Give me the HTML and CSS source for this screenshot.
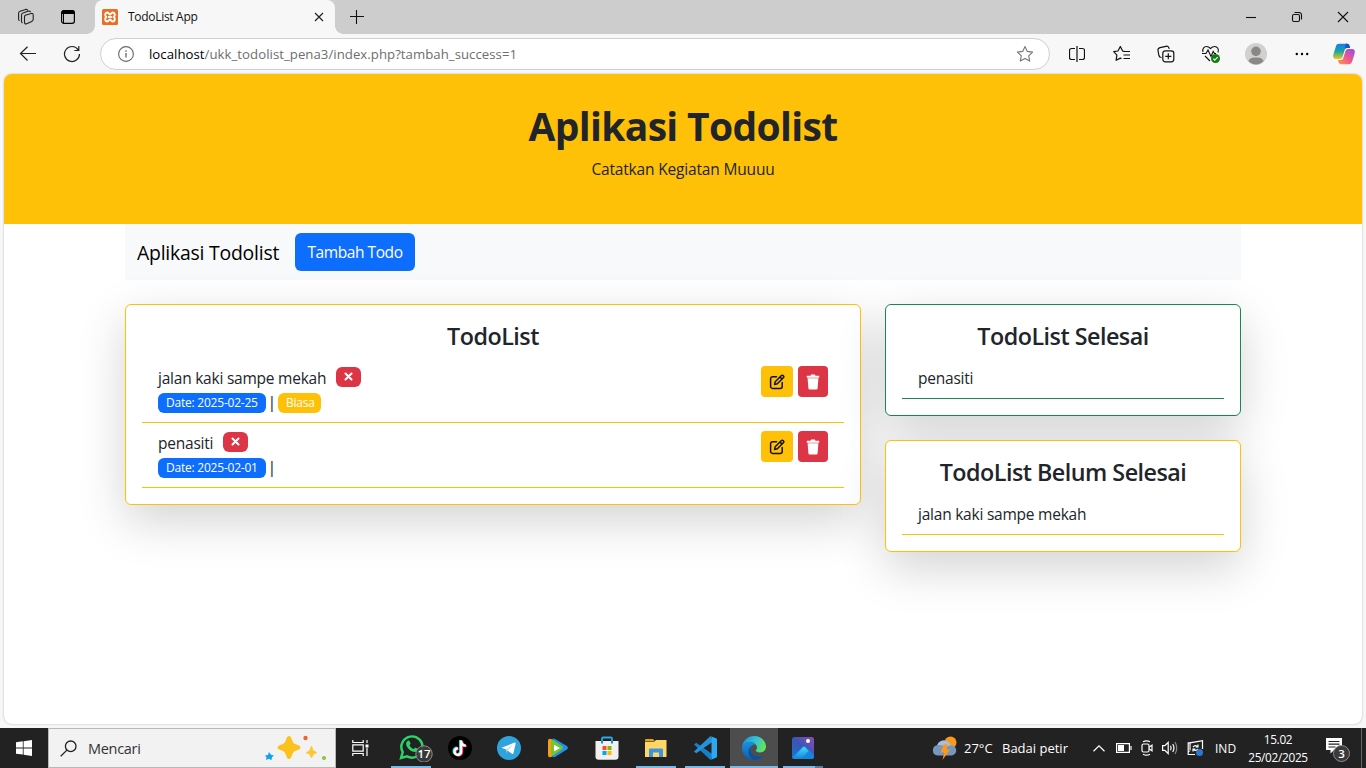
FILE: index.html
```html
<!DOCTYPE html>
<html lang="id">
<head>
<meta charset="utf-8">
<title>TodoList App</title>
<link rel="stylesheet" href="styles.css">
</head>
<body>
<div class="desktop">
  <header class="titlebar">
    <svg class="tb-icon workspaces" width="18" height="18" viewBox="0 0 18 18" fill="none" stroke="#222" stroke-width="1.100" stroke-linejoin="round" stroke-linecap="round"><path d="M8.300 7.300l5.900-1.800q2-.5 2 1.500v4.200q0 1.500-1.500 2.200l-5 2.300q-2.200.8-2.200-1.500V9q0-1.300.8-1.700z"/><path d="M4.500 13.500V7q0-1.500 1.500-2l5.500-1.900q1.300-.3 1.900.6M1.600 11.500V5.200q0-1.500 1.500-2L8.600 1.400q1.300-.3 1.900.6M4.500 13.500q.1.800.7 1.200M1.600 11.500q.1.700.6 1"/></svg>
    <svg class="tb-icon tabs" width="16" height="16" viewBox="0 0 16 16"><rect x="1.600" y="1.600" width="12.800" height="12.800" rx="2.400" fill="none" stroke="#000" stroke-width="1.200"/><path d="M1.200 5V4a3 3 0 0 1 3-3h7.600a3 3 0 0 1 3 3v1z"/><path d="M3.500 4.500v9.500" stroke="#000" stroke-width="1"/></svg>
    <div class="tab">
      <svg width="16" height="16" viewBox="0 0 16 16"><rect width="16" height="16" rx="1.500" fill="#e96f24"/><path d="M5.200 3.500c1.800 0 1.800 2 2.800 2s1-2 2.800-2c2.200 0 2.700 3.200 1 4.500 1.700 1.300 1.200 4.500-1 4.500-1.800 0-1.800-2-2.800-2s-1 2-2.800 2c-2.200 0-2.700-3.200-1-4.500-1.700-1.300-1.200-4.500 1-4.500z" fill="none" stroke="#fff" stroke-width="1.900"/><path d="M6 8h4" stroke="#fff" stroke-width="1.800"/></svg>
      <span class="tab-title">TodoList App</span>
      <svg class="tab-close" width="10" height="10" viewBox="0 0 10 10" stroke="#222" stroke-width="1.200"><path d="M1 1l8 8M9 1l-8 8"/></svg>
    </div>
    <svg class="new-tab" width="14" height="14" viewBox="0 0 14 14" stroke="#111" stroke-width="1.100"><path d="M0 6.500h14M6.500 0v14"/></svg>
    <div class="win-controls">
      <svg viewBox="0 0 12 12"><path d="M1 6.500h10"/></svg>
      <svg viewBox="0 0 12 12"><rect x="1.500" y="3.500" width="7" height="7" rx="1.500"/><path d="M3.500 1.500h4.500a2.500 2.500 0 0 1 2.500 2.500v4.500"/></svg>
      <svg viewBox="0 0 12 12"><path d="M1 1l10 10M11 1L1 11"/></svg>
    </div>
  </header>
  <div class="toolbar">
    <svg class="back" width="18" height="16" viewBox="0 0 18 16" fill="none" stroke="#222" stroke-width="1.200"><path d="M17 7.500H1.500M8.500 .8L1.500 7.500l7 7"/></svg>
    <svg class="reload" width="18" height="18" viewBox="0 0 18 18" fill="none" stroke="#222" stroke-width="1.200"><path d="M16.500 9A7.500 7.500 0 1 1 15.200 4.800M15.800 1v4.500h-4.500"/></svg>
    <div class="address">
      <svg width="16" height="16" viewBox="0 0 16 16" fill="none" stroke="#666"><circle cx="8" cy="8" r="7.400" stroke-width="1.100"/><path d="M8 7v4.500M8 4.300v1.400" stroke-width="1.300"/></svg>
      <span class="url"><b>localhost</b>/ukk_todolist_pena3/index.php?tambah_success=1</span>
      <svg class="star" width="18" height="18" viewBox="0 0 18 18" fill="none" stroke="#777" stroke-width="1.100" stroke-linejoin="round"><path d="M9 1.500l2.300 4.900 5.300.7-3.900 3.700 1 5.300L9 13.500l-4.700 2.600 1-5.300L1.400 7.100l5.300-.7z"/></svg>
    </div>
    <div class="tools">
      <span class="tool"><svg width="16" height="16" viewBox="0 0 16 16" fill="none" stroke="#111" stroke-width="1.200"><path d="M6 2.500H2.500a2 2 0 0 0-2 2v7a2 2 0 0 0 2 2H6M10 2.500h3.500a2 2 0 0 1 2 2v7a2 2 0 0 1-2 2H10M8 0v16"/></svg></span>
      <span class="tool"><svg width="18" height="18" viewBox="0 0 18 18" fill="none" stroke="#111" stroke-width="1.200" stroke-linejoin="round"><path d="M11.500 6.300L9.600 6 7.300 1.500 5 6l-4.300.7 3.200 3.400-.8 5.200 4.200-2.200 1.200.6"/><path d="M10.500 6.500H17M10.500 10H17M10.500 13.500H17"/></svg></span>
      <span class="tool"><svg width="18" height="18" viewBox="0 0 18 18" fill="none" stroke="#111" stroke-width="1.200"><rect x="5.800" y="5.800" width="11" height="11" rx="2.500"/><path d="M11.300 8.300v6M8.300 11.300h6M4.500 12.500c-1.500 0-2.300-.700-2.600-2L1 5.500C.7 4 1.500 3 3 2.600l6-1.300c1.400-.3 2.400.3 2.900 1.600l.3 1"/></svg></span>
      <span class="tool heart"><svg width="20" height="20" viewBox="0 0 20 20" fill="none" stroke="#111" stroke-width="1.100"><path d="M2 8C1 5 3 2.500 5.500 2.500c1.700 0 2.800.8 4 2C10.700 3.300 11.800 2.500 13.500 2.500c3 0 4.700 2.800 3.500 6M1 9.500h4l2-3.500 3 6.500 2.200-5 1.300 2h1.500M4 12l5 5"/><circle cx="14.500" cy="14.500" r="4.500" fill="#107c10" stroke="none"/><path d="M12.300 14.700l1.500 1.500 2.900-3" stroke="#fff"/></svg></span>
      <span class="tool"><svg width="22" height="22" viewBox="0 0 22 22"><circle cx="11" cy="11" r="11" fill="#d2d0ce"/><circle cx="11" cy="8.300" r="4.800" fill="#8a8886"/><path d="M3.500 18c1-3 4-3.500 7.500-3.500s6.500.5 7.500 3.500c-2 2.300-4.500 3.500-7.500 3.500S5.500 20.300 3.500 18z" fill="#8a8886"/></svg></span>
      <span class="tool"><svg width="14" height="4" viewBox="0 0 14 4"><circle cx="1.800" cy="2" r="1.200"/><circle cx="7" cy="2" r="1.200"/><circle cx="12.200" cy="2" r="1.200"/></svg></span>
      <span class="tool"><svg width="22" height="22" viewBox="0 0 22 22"><defs><linearGradient id="cpA" x1="0" y1="0" x2="0" y2="1"><stop offset="0" stop-color="#1b7fe8"/><stop offset=".5" stop-color="#17a6a5"/><stop offset="1" stop-color="#f2c811"/></linearGradient><linearGradient id="cpB" x1="1" y1="0" x2="0" y2="1"><stop offset="0" stop-color="#8b4df0"/><stop offset=".5" stop-color="#ee5590"/><stop offset="1" stop-color="#ff9a4a"/></linearGradient></defs><path d="M6 .8h8c2 0 2.500 1.500 3 4.200h-3c-1.500 0-2 .8-2.500 2.500l-1.800 6c-.5 1.700-1.500 2.500-3 2.500H3c-3 0-3.200-2.500-2.500-5L2.700 4C3.300 2 4 .8 6 .8z" fill="url(#cpA)"/><path d="M12.500.8H14c2 0 2.500 1.500 3 4.200h-3c-1 0-1.700.4-2.100 1.300z" fill="#1558c9"/><path d="M16 21.200H8c-2 0-2.500-1.500-3-4.200h3c1.500 0 2-.8 2.500-2.500l1.800-6C12.800 6.800 13.800 6 15.300 6H19c3 0 3.200 2.500 2.500 5l-2.200 7c-.6 2-1.300 3.200-3.300 3.200z" fill="url(#cpB)"/></svg></span>
    </div>
  </div>
  <main class="page">
    <section class="hero">
      <h1>Aplikasi Todolist</h1>
      <p>Catatkan Kegiatan Muuuu</p>
    </section>
    <div class="container">
      <nav class="navbar"><span class="brand">Aplikasi Todolist</span><button class="btn-add"><span>Tambah Todo</span></button></nav>
      <div class="columns">
        <section class="card">
          <h4>TodoList</h4>
          <div class="item">
            <div>
              <div class="line"><span class="task w-long">jalan kaki sampe mekah</span><span class="badge danger"><svg width="9" height="9" viewBox="0 0 9 9"><path d="M1.500 1.500l6 6M7.500 1.500l-6 6"/></svg></span></div>
              <div class="line meta"><span class="badge primary">Date: 2025-02-25</span><span class="bar">|</span><span class="badge warning">Biasa</span></div>
            </div>
            <div class="actions">
              <button class="act edit"><svg width="16" height="16" viewBox="0 0 16 16"><use href="#pen"/></svg></button>
              <button class="act trash"><svg width="14" height="16" viewBox="0 0 14 16"><use href="#bin"/></svg></button>
            </div>
          </div>
          <div class="item">
            <div>
              <div class="line"><span class="task w-short">penasiti</span><span class="badge danger"><svg width="9" height="9" viewBox="0 0 9 9"><path d="M1.500 1.500l6 6M7.500 1.500l-6 6"/></svg></span></div>
              <div class="line meta"><span class="badge primary">Date: 2025-02-01</span><span class="bar">|</span></div>
            </div>
            <div class="actions">
              <button class="act edit"><svg width="16" height="16" viewBox="0 0 16 16"><use href="#pen"/></svg></button>
              <button class="act trash"><svg width="14" height="16" viewBox="0 0 14 16"><use href="#bin"/></svg></button>
            </div>
          </div>
        </section>
        <div class="side">
          <section class="card done">
            <h4>TodoList Selesai</h4>
            <div class="item"><span class="task">penasiti</span></div>
          </section>
          <section class="card">
            <h4>TodoList Belum Selesai</h4>
            <div class="item"><span class="task">jalan kaki sampe mekah</span></div>
          </section>
        </div>
      </div>
    </div>
  </main>
  <footer class="taskbar">
    <div class="start"><svg width="16" height="16" viewBox="0 0 16 16" fill="#fff"><path d="M0 2.200l6.800-.9v6.200H0zM7.600 1.200L16 0v7.500H7.600zM0 8.400h6.800v6.200L0 13.700zM7.600 8.400H16V16l-8.400-1.200z"/></svg></div>
    <div class="search">
      <svg width="17" height="17" viewBox="0 0 17 17" fill="none" stroke="#222" stroke-width="1.300"><circle cx="10.700" cy="6.300" r="5.300"/><path d="M6.900 10.100L.7 16.300"/></svg>
      <span>Mencari</span>
      <svg class="sparkles" width="62" height="26" viewBox="0 0 62 26"><path d="M24 1c1.500 0 2.500 2 3.300 4.500.8 2.300 1.500 3 3.900 3.900C33.500 10.200 35.500 11 35.500 12.500s-2 2.300-4.300 3.100c-2.400.9-3.100 1.600-3.900 3.900-.8 2.500-1.800 4.500-3.300 4.500s-2.500-2-3.300-4.500c-.8-2.300-1.500-3-3.900-3.900-2.300-.8-4.300-1.600-4.300-3.100s2-2.300 4.300-3.100c2.400-.9 3.100-1.600 3.900-3.900C21.500 3 22.500 1 24 1z" fill="#fbc21d"/><path d="M46.500 11c1 0 1.500 3.700 2.200 4.400s3.300 1.100 3.300 2.100-2.700 1.300-3.300 2-1.200 3.500-2.200 3.500-1.500-2.900-2.200-3.500-3.300-1-3.300-2 2.700-1.400 3.300-2.100 1.200-4.400 2.200-4.400z" fill="#fcc732"/><path d="M4 17l2 2.700 3 .7-2 1.800-.6 3-2.400-1.400L1 25l.5-2.700L0 20.500l3-.5z" fill="#12a2ec"/><circle cx="40.500" cy="3" r="2.200" fill="#f0622d"/><circle cx="59" cy="23" r="2.100" fill="#8bc53f"/></svg>
    </div>
    <div class="taskview"><svg width="17" height="16" viewBox="0 0 17 16" fill="none" stroke="#fff" stroke-width="1.200"><path d="M.8 0v2.500h10.400V0M.8 16v-2.500h10.400V16M.8 4.800h10.400v6.400H.8zM15 0v3M15 8v8"/><path d="M13.500 4.500h3v3h-3z" fill="#fff" stroke="none"/></svg></div>
    <div class="apps">
      <div class="app run"><svg width="34" height="28" viewBox="0 0 34 28"><path d="M2 24l1.700-5.800A10.600 10.600 0 1 1 8 22.400z" fill="none" stroke="#2bd467" stroke-width="2.400"/><path d="M8.300 7.300c.8-1 2-.9 2.400.1l.8 1.900c.2.600-.5 1.300-1 1.900.9 1.900 2.200 3.100 4.100 3.900.7-.8 1.300-1.700 1.900-1.400l2.200 1c.7.400.4 1.700-.3 2.400-1.300 1.200-3.200 1.200-5.600.1-2.600-1.200-5.400-4-5.700-7.200 0-1.200.5-2.100 1.200-2.700z" fill="#2bd467"/><circle cx="25" cy="21" r="8.200" fill="#3b3b3b" fill-opacity=".92" stroke="#8c8c8c" transform="translate(0 -1)"/><text x="25" y="24.300" class="count">17</text></svg></div>
      <div class="app"><svg width="24" height="24" viewBox="0 0 24 24"><circle cx="12" cy="12" r="12"/><g fill="none" stroke-width="2.600"><path d="M12.400 4v11a3.300 3.300 0 1 1-3.300-3.200M12.400 5c.3 2.500 2 4 4.600 4.200" stroke="#25f4ee"/><path d="M14 5v11a3.300 3.300 0 1 1-3.300-3.200M14 6c.3 2.500 2 4 4.600 4.200" stroke="#fe2c55"/><path d="M13.200 4.500v11a3.300 3.300 0 1 1-3.300-3.200M13.200 5.500c.3 2.500 2 4 4.600 4.200" stroke="#fff" stroke-width="2.200"/></g></svg></div>
      <div class="app"><svg width="24" height="24" viewBox="0 0 24 24"><circle cx="12" cy="12" r="12" fill="#2fa3dc"/><path d="M4.500 11.800l13-5.200c.8-.3 1.300.2 1.100 1.100L16.500 17c-.2.900-.8 1.100-1.500.7L9 13.500z" fill="#fff"/><path d="M9 13.500l7-5-5.600 6.200-.4 3z" fill="#b9dcf0"/></svg></div>
      <div class="app"><svg width="22" height="20" viewBox="0 0 22 20"><path d="M1 3Q1 0 4 1l7 3v12l-7 3q-3 1-3-2z" fill="#ff9a13"/><path d="M5 2.500Q5-.5 8 1l11.500 6.700q2.800 2 0 4L8 19q-3 1-3-2z" fill="#2190ef"/><path d="M4 4q0-3 3-1.500l8 5.500q2 1.700 0 3.500l-8 5.500q-3 1.500-3-1.500z" fill="#72c72b"/><path d="M7 6.700l6 3.300-6 3.400z" fill="#fff"/></svg></div>
      <div class="app"><svg width="24" height="24" viewBox="0 0 24 24"><path d="M7 7V2.700Q7 1.500 8.200 1.500h7.600q1.200 0 1.200 1.200V7" fill="none" stroke="#29a9e8" stroke-width="1.800"/><path d="M.5 5h23v15.500q0 3.300-3.300 3.300H3.800Q.5 23.800.5 20.500z" fill="#f0f0f0"/><path d="M7.500 10h4v4h-4z" fill="#f25022"/><path d="M12.500 10h4v4h-4z" fill="#7fba00"/><path d="M7.500 15h4v4h-4z" fill="#00a4ef"/><path d="M12.500 15h4v4h-4z" fill="#ffb900"/><path d="M6 5h2v2.500H6zM16 5h2v2.500h-2z" fill="#1b8fd0"/></svg></div>
      <div class="app run"><svg width="22" height="20" viewBox="0 0 22 20"><path d="M0 2q0-1 1-1h7l2 2.500H0z" fill="#e5a50a"/><path d="M0 4h9l2-2h10.500v17H0z" fill="#ffd767"/><path d="M4 19v-7.500q0-1 1-1h12q1 0 1 1V19h-4v-4.500H8V19z" fill="#3e95dd"/></svg></div>
      <div class="app run"><svg width="24" height="24" viewBox="0 0 24 24"><path d="M1 8.500L3.200 6.700 20 18.600 17.500 24z" fill="#1181cc"/><path d="M1 15.500l2.200 1.800L20 5.400 17.500 0z" fill="#2493dc"/><path d="M17.500 0L24 2.700v18.600L17.500 24q1-.3 1-1.800V1.800Q18.500.3 17.500 0z" fill="#2ea8ef"/></svg></div>
      <div class="app run active"><svg width="24" height="24" viewBox="0 0 24 24"><defs><linearGradient id="eTop" x1="0" y1=".3" x2="1" y2=".6"><stop offset="0" stop-color="#1795dd"/><stop offset=".5" stop-color="#35c1d8"/><stop offset="1" stop-color="#63e84f"/></linearGradient><linearGradient id="eLow" x1="0" y1="0" x2="0" y2="1"><stop offset="0" stop-color="#1a91dd"/><stop offset="1" stop-color="#0b5faf"/></linearGradient></defs><path d="M.2 11C.8 4.500 6 0 12 0c7 0 12 5 12 10.500 0 3.700-2.800 6-6 6-2.700 0-4.200-1-4.200-1.900 0-.7 1.200-1.100 1.200-3C15 8 11 6 7.500 6 4 6 1.400 8.200.2 11z" fill="url(#eTop)"/><path d="M0 12c0-3.500 3.200-6 7.500-6 2.800 0 5 1 6.300 2.600C10 8 8.400 11 8.400 13.500c0 4.400 4.400 7 8.600 7 2 0 3.700-.7 4.700-1.100C19.500 22.300 16 24 12 24 5.500 24 0 19 0 12z" fill="url(#eLow)"/><path d="M9.500 9.800C7.500 12 7.500 20 17 20.500c2 0 3.700-.7 4.700-1.100-2.500 3.500-6.500 4.600-9.700 4.600-5.500-2-7.500-11-2.500-14.200z" fill="#144f94"/></svg></div>
      <div class="app run stacked"><svg width="22" height="22" viewBox="0 0 22 22"><defs><linearGradient id="ph" x1="0" y1="1" x2="1" y2="0"><stop offset="0" stop-color="#1677d2"/><stop offset=".5" stop-color="#3b55b5"/><stop offset="1" stop-color="#8a4fb0"/></linearGradient><linearGradient id="hill" x1="0" y1="0" x2="0" y2="1"><stop offset="0" stop-color="#45dcf7"/><stop offset="1" stop-color="#1782dd"/></linearGradient></defs><rect width="22" height="22" rx="2.500" fill="url(#ph)"/><circle cx="16" cy="4" r="2" fill="#fff"/><path d="M0 20L10.500 9.500q1.500-1.200 3 0L22 18v1.500Q22 22 19.500 22h-17Q.5 22 0 20z" fill="#1586dd"/><path d="M1 21L11 10.300q1-.9 2 0l3.500 3.700L9 22H2.500z" fill="url(#hill)"/></svg></div>
    </div>
    <div class="weather">
      <svg width="25" height="25" viewBox="0 0 25 25"><circle cx="18.500" cy="6.500" r="6" fill="#fb9a16"/><path d="M5.500 19.500a5.200 5.200 0 0 1-.3-10.300A7.400 7.400 0 0 1 19 9.500a5 5 0 0 1 .5 10z" fill="#7596bd"/><path d="M5.200 9.200A7.400 7.400 0 0 1 19 9.500c-2 0-3.500.5-4.500 2-2-2-6-3-9.300-2.300z" fill="#a9bfd8"/><path d="M11.500 8.500h4.500l-1.500 5H18L10.500 24l1.700-7.500H8.700z" fill="#ff961e"/></svg>
      <span class="temp">27°C</span><span class="cond">Badai petir</span>
    </div>
    <div class="tray">
      <svg width="12" height="7" viewBox="0 0 12 7"><path d="M.5 6.300L6 .9l5.500 5.400"/></svg>
      <svg width="16" height="10" viewBox="0 0 16 10"><path d="M.6.600h12.800v8.800H.6zM15 3v4"/><path d="M2 2h6v6H2z" fill="#fff" stroke="none"/></svg>
      <svg width="13" height="16" viewBox="0 0 13 16"><rect x="1" y="4" width="7" height="8" rx="1.500"/><path d="M8 7.200l3-2v5.600l-3-2M2 1.800q3.500-2 7 0M2 14.200q3.500 2 7 0"/></svg>
      <svg width="17" height="14" viewBox="0 0 17 14"><path d="M.6 4.700h2.200l3.400-3.200v11L2.800 9.300H.6zM8.500 4.700q1.300 2.300 0 4.600M10.700 3q2.500 4 0 8"/><path d="M13 1q3.500 6 0 12" stroke="#888"/></svg>
      <svg width="17" height="16" viewBox="0 0 17 16"><path d="M8 14.500H1.200V12M.6 11.500h2M3 10.500V2.800L15.500.700V9M3 2.800H1.200V12M6 7q2.500-2.800 5 0M11 4.500V7H8.700M11 9q-2.500 2.800-5 0M6 11.500V9h2.300"/><circle cx="12.500" cy="12.500" r="3.500" fill="#2b78cf" stroke="none"/></svg>
      <span class="lang">IND</span>
    </div>
    <div class="clock"><span>15.02</span><span class="date">25/02/2025</span></div>
    <div class="notify"><svg width="26" height="26" viewBox="0 0 26 26"><path d="M1 1h16v12H9l-3.500 3.500V13H1z" fill="#fff"/><path d="M3.500 4.500h11M3.500 7.200h11M3.500 10h7" stroke="#222" stroke-width="1.200"/><circle cx="16.500" cy="16.500" r="8" fill="#3b3b3b" stroke="#8c8c8c"/><text x="16.500" y="20.500" class="count">3</text></svg></div>
  </footer>
</div>
<svg class="symbols" width="0" height="0">
  <symbol id="pen" viewBox="0 0 16 16"><path d="M7.500 2.800H3.600A2 2 0 0 0 1.600 4.800v7.600a2 2 0 0 0 2 2h7.600a2 2 0 0 0 2-2V8.600M5.600 10.400l.6-2.700 6-6a1.400 1.400 0 0 1 2.100 2.100l-6 6zM11 3l2.100 2.100" fill="none" stroke="#111" stroke-width="1.500" stroke-linejoin="round" stroke-linecap="round"/></symbol>
  <symbol id="bin" viewBox="0 0 14 16"><path d="M.8 1.800h3.700L5.200.6h3.600l.7 1.200h3.700v1.900H.8zM1.600 4.300h10.800l-.8 9.900q-.1 1.200-1.300 1.200H3.700q-1.200 0-1.300-1.200z" fill="#fff"/></symbol>
</svg>
</body>
</html>
```
FILE: styles.css
```css
* { box-sizing: border-box; }
body { margin: 0; font-family: "Open Sans", "Noto Sans", sans-serif; color: #212529; overflow: hidden; }
button { font-family: inherit; border: 0; padding: 0; }
svg { display: block; flex: none; }
.symbols { position: absolute; }
.desktop { width: 1366px; height: 768px; display: flex; flex-direction: column; background: #f7f7f7; overflow: hidden; }

/* browser window */
.titlebar { height: 34px; flex: none; background: #cdcdcd; display: flex; align-items: center; }
.workspaces { margin-left: 17px; }
.tabs { margin-left: 25px; }
.tab { position: relative; width: 240px; height: 34px; margin-left: 19px; padding: 0 11px 0 7px; background: #f7f7f7; border-radius: 8px 8px 0 0; display: flex; align-items: center; }
.tab::before, .tab::after { content: ""; position: absolute; bottom: 0; width: 8px; height: 8px; }
.tab::before { left: -8px; background: radial-gradient(circle at 0 0, #cdcdcd 7.500px, #f7f7f7 8px); }
.tab::after { right: -8px; background: radial-gradient(circle at 100% 0, #cdcdcd 7.500px, #f7f7f7 8px); }
.tab-title { margin-left: 10px; padding-bottom: 1px; font-size: 12px; color: #111; letter-spacing: -.3px; white-space: nowrap; }
.tab-close { margin-left: auto; }
.new-tab { margin-left: 15px; }
.win-controls { margin-left: auto; display: flex; }
.win-controls svg { width: 46px; height: 12px; fill: none; stroke: #111; stroke-width: 1.100; }
.toolbar { height: 40px; flex: none; display: flex; align-items: center; }
.back { margin-left: 19px; }
.reload { margin-left: 26px; }
.address { width: 950px; height: 32px; margin-left: 19px; padding: 0 15px 0 17px; border: 1px solid #cfcfd4; border-radius: 16px; background: #fff; display: flex; align-items: center; }
.url { margin-left: 15px; font-size: 13.200px; letter-spacing: .04px; color: #6e6e6e; white-space: nowrap; }
.url b { font-weight: 400; color: #000; }
.star { margin-left: auto; }
.tools { display: grid; grid-template-columns: 44px 45px 44px 44px 47px 46px 37px; margin-left: 5px; }
.tool { display: flex; align-items: center; justify-content: center; height: 40px; }
.heart { padding-left: 2px; }

/* web page */
.page { width: 1358px; height: 650px; flex: none; margin-left: 4px; background: #fff; border-radius: 8px; overflow: hidden; box-shadow: 0 0 2px #aaa; }
.hero { height: 150px; padding-top: 28px; background: #ffc107; text-align: center; }
.hero h1 { margin: 0 0 7px; font-size: 39px; line-height: 48px; font-weight: 700; letter-spacing: -.65px; }
.hero p { margin: 0; font-size: 15.500px; line-height: 24px; letter-spacing: -.17px; }
.container { width: 1116px; margin: 0 auto; }
.navbar { height: 56px; padding-left: 12px; background: #f8f9fa; display: flex; align-items: center; }
.brand { width: 158px; font-size: 19.400px; letter-spacing: -.22px; color: #000; white-space: nowrap; }
.btn-add { width: 120px; height: 38px; border-radius: 6px; background: #0d6efd; color: #fff; font-size: 15.500px; letter-spacing: -.43px; white-space: nowrap; }
.columns { display: grid; grid-template-columns: 736px 356px; gap: 24px; margin-top: 24px; align-items: start; }
.side { display: grid; gap: 24px; }
.card { padding: 16px; border: 1px solid #ffc107; border-radius: 6px; background: #fff; box-shadow: 0 16px 48px rgba(0, 0, 0, .175); }
.card.done { border-color: #198754; }
.card h4 { margin: 0; padding-top: 1px; height: 37px; font-size: 23.300px; line-height: 29px; font-weight: 600; letter-spacing: -.5px; text-align: center; }
.item { padding: 8px 16px; border-bottom: 1px solid #ffc107; display: flex; justify-content: space-between; line-height: 24px; }
.done .item { border-color: #198754; }
.side .item { height: 41px; }
.line { height: 24px; display: flex; align-items: flex-start; }
.task { font-size: 15.500px; letter-spacing: -.23px; white-space: nowrap; }
.w-long { width: 178px; }
.w-short { width: 65px; }
.badge { height: 20px; padding: 0 8px; margin-top: 1px; border-radius: 6px; color: #fff; font-size: 12px; letter-spacing: -.22px; line-height: 20px; white-space: nowrap; font-weight: 400; }
.danger { width: 25px; padding-bottom: 1px; background: #dc3545; display: flex; align-items: center; }
.danger path { stroke: #fff; stroke-width: 2.100; stroke-linecap: round; }
.meta .badge { margin-top: 3px; }
.primary { width: 108px; background: #0d6efd; }
.warning { width: 43px; background: #ffc107; }
.bar { width: 12px; text-align: center; font-size: 16px; }
.actions { display: flex; gap: 5px; }
.act { height: 31px; border-radius: 4px; display: flex; align-items: center; justify-content: center; }
.edit { width: 32px; background: #ffc107; }
.trash { width: 30px; background: #dc3545; }

/* taskbar */
.taskbar { height: 40px; flex: none; margin-top: 4px; background: #222; color: #fff; display: flex; align-items: center; }
.taskbar > * { flex: none; }
.start { width: 48px; display: flex; justify-content: center; }
.search { width: 288px; height: 40px; padding: 0 8px 0 11px; border: 1px solid #b8b8b8; background: #f2f2f2; color: #333; display: flex; align-items: center; font-size: 14.500px; }
.search span { margin-left: 11px; letter-spacing: -.3px; }
.sparkles { margin-left: auto; }
.taskview { width: 50px; padding-right: 1px; display: flex; justify-content: center; }
.apps { display: grid; grid-template-columns: repeat(9, 49px); height: 40px; }
.app { display: flex; align-items: center; justify-content: center; }
.app:first-child { padding-left: 10px; }
.run { background: linear-gradient(#76b9ed, #76b9ed) 5px 38px / 40px 2px no-repeat; }
.active { width: 48px; margin-left: 1px; background: linear-gradient(#76b9ed, #76b9ed) 0 38px / 48px 2px no-repeat #4d4d4d; }
.stacked { background: linear-gradient(90deg, #76b9ed 32px, #547fa3 32px) 5px 38px / 40px 2px no-repeat; }
.count { fill: #fff; font-size: 11.500px; font-weight: 600; text-anchor: middle; }
.weather { display: flex; align-items: center; margin-left: 105px; font-size: 13px; white-space: nowrap; }
.temp { width: 38px; margin-left: 7px; }
.cond { width: 91px; }
.tray { display: grid; grid-template-columns: 23px 25px 21px 25px 28px 31px; align-items: center; font-size: 12px; }
.tray svg { fill: none; stroke: #fff; stroke-width: 1.200; }
.clock { width: 64px; display: flex; flex-direction: column; align-items: center; font-size: 11.800px; line-height: 18px; padding-bottom: 1px; letter-spacing: -.3px; }
.notify { margin-left: 15px; padding-top: 3px; width: 37px; height: 40px; border-right: 1px solid #666; display: flex; align-items: center; }
```
